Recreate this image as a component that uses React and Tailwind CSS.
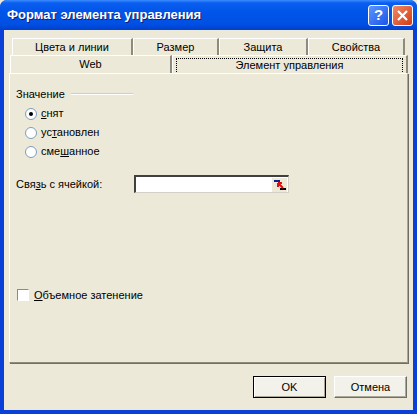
import { useState } from 'react';

const font = { fontFamily: '"Liberation Sans", Arial, sans-serif' };

function Radio({ checked, children }) {
  return (
    <div className="flex items-center h-[19px]">
      <span className="relative w-[12px] h-[12px] rounded-full border border-[#7F9DB9] bg-white ml-[9px] mr-[4px] flex items-center justify-center">
        {checked && <span className="w-[4px] h-[4px] rounded-full bg-black" />}
      </span>
      <span>{children}</span>
    </div>
  );
}

function Tab({ w, children, focus }) {
  return (
    <div
      className="h-full flex items-center justify-center border-t border-l border-white border-r-2 border-r-[#8E8B7E]"
      style={{ width: w }}
    >
      {focus ? (
        <span className="w-[calc(100%-6px)] h-[16px] mt-[2px] border border-dotted border-black flex items-center justify-center">
          {children}
        </span>
      ) : (
        children
      )}
    </div>
  );
}

function Button({ children, def }) {
  return (
    <button
      className={`w-[73px] h-[22px] bg-[#F2F1EA] text-[11px] text-black flex items-center justify-center ${
        def
          ? 'border border-black shadow-[inset_1px_1px_0_#fff,inset_-1px_-1px_0_#ACA899]'
          : 'border border-[#fff] border-r-[#716F64] border-b-[#716F64] shadow-[inset_-1px_-1px_0_#ACA899]'
      }`}
    >
      {children}
    </button>
  );
}

export default function App() {
  const [shade, setShade] = useState(false);
  return (
    <div className="w-[417px] h-[414px] flex flex-col bg-[#ECE9D8] text-black text-[11px]" style={font}>
      <div className="flex-1 flex flex-col bg-[#0A3FD8] rounded-t-[7px]">
        {/* Title bar */}
        <div className="h-[30px] flex items-center pl-[7px] pr-[4px] rounded-t-[7px] bg-[linear-gradient(to_bottom,#3B8CFF_0%,#0A5EF0_10%,#0055E8_40%,#0050E4_80%,#0040CC_100%)]">
          <span className="text-white font-bold text-[13px] flex-1 [text-shadow:1px_1px_0_#0A1E7A]">
            Формат элемента управления
          </span>
          <div className="flex gap-[3px]">
            <div className="w-[21px] h-[21px] rounded-[3px] border border-white bg-[linear-gradient(135deg,#5D95FF,#1A55E8)] flex items-center justify-center text-white font-bold text-[15px]">
              ?
            </div>
            <div className="w-[21px] h-[21px] rounded-[3px] border border-white bg-[linear-gradient(135deg,#F08A66,#D43A13)] flex items-center justify-center">
              <svg width="11" height="11" viewBox="0 0 11 11">
                <path d="M1 1 L10 10 M10 1 L1 10" stroke="#fff" strokeWidth="2.2" />
              </svg>
            </div>
          </div>
        </div>

        {/* Client */}
        <div className="flex-1 mx-[4px] mb-[4px] bg-[#ECE9D8] flex flex-col pt-[7px] pl-[5px] pr-[5px]">
          {/* Tab rows */}
          <div className="h-[18px] flex pl-[3px] pt-[1px]">
            <Tab w={121}>Цвета и линии</Tab>
            <Tab w={86}>Размер</Tab>
            <Tab w={89}>Защита</Tab>
            <Tab w={97}>Свойства</Tab>
          </div>
          <div className="h-[18px] flex pl-[1px]">
            <Tab w={162}>Web</Tab>
            <Tab w={236} focus>
              Элемент управления
            </Tab>
          </div>

          {/* Panel */}
          <div className="w-[399px] h-[290px] border border-white border-r-[#ACA899] border-b-[#8E8B7E] shadow-[1px_1px_0_#716F64] pl-[6px] pt-[13px] flex flex-col">
            <div className="flex items-center h-[14px]">
              <span>Значение</span>
              <span className="ml-[6px] w-[62px] h-[2px] border-t border-[#D0D0BF] border-b border-b-white" />
            </div>
            <div className="mt-[3px] flex flex-col">
              <Radio checked>
                <u>с</u>нят
              </Radio>
              <Radio>
                ус<u>т</u>ановлен
              </Radio>
              <Radio>
                сме<u>ш</u>анное
              </Radio>
            </div>
            <div className="mt-[14px] flex items-center">
              <span className="w-[118px]">
                Свя<u>з</u>ь с ячейкой:
              </span>
              <div className="w-[155px] h-[18px] bg-white border-t-2 border-l-2 border-t-[#404040] border-l-[#404040] border-r border-b border-r-[#D4D0C8] border-b-[#D4D0C8] flex justify-end items-center pr-[1px]">
                <svg width="15" height="14" viewBox="0 0 15 14">
                  <rect x="0" y="0" width="15" height="14" fill="#ECE9D8" />
                  <rect x="2" y="2" width="6" height="2" fill="#0A1E9A" />
                  <rect x="8" y="10" width="6" height="2" fill="#000" />
                  <path d="M6 5 L11 10 M6 5 L6 9 M6 5 L10 5" stroke="#E01010" strokeWidth="2" />
                </svg>
              </div>
            </div>
            <div className="mt-[94px] flex items-center">
              <button
                onClick={() => setShade(!shade)}
                className="w-[12px] h-[12px] bg-white border border-[#8E8B7E] border-r-white border-b-white mr-[5px] ml-[1px]"
              />
              <span>
                <u>О</u>бъемное затенение
              </span>
            </div>
          </div>

          {/* Buttons */}
          <div className="flex justify-end gap-[8px] mt-[13px] pr-[1px]">
            <Button def>OK</Button>
            <Button>Отмена</Button>
          </div>
        </div>
      </div>
    </div>
  );
}
